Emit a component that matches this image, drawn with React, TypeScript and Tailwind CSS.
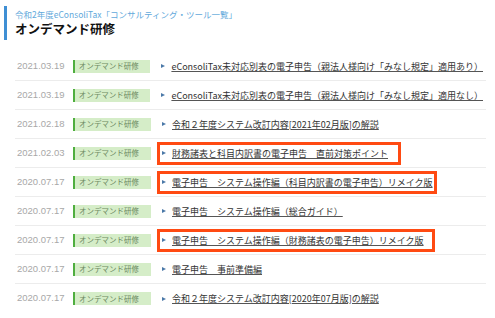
import React from 'react';

type Item = {
  date: string;
  title: string;
  boxWidth?: number;
};

const items: Item[] = [
  { date: '2021.03.19', title: 'eConsoliTax未対応別表の電子申告（親法人様向け「みなし規定」適用あり）' },
  { date: '2021.03.19', title: 'eConsoliTax未対応別表の電子申告（親法人様向け「みなし規定」適用なし）' },
  { date: '2021.02.18', title: '令和２年度システム改訂内容[2021年02月版]の解説' },
  { date: '2021.02.03', title: '財務諸表と科目内訳書の電子申告　直前対策ポイント', boxWidth: 244 },
  { date: '2020.07.17', title: '電子申告　システム操作編（科目内訳書の電子申告）リメイク版', boxWidth: 280 },
  { date: '2020.07.17', title: '電子申告　システム操作編（総合ガイド）' },
  { date: '2020.07.17', title: '電子申告　システム操作編（財務諸表の電子申告）リメイク版', boxWidth: 278 },
  { date: '2020.07.17', title: '電子申告　事前準備編' },
  { date: '2020.07.17', title: '令和２年度システム改訂内容[2020年07月版]の解説' },
];

const jp = { fontFamily: '"Noto Sans CJK JP", "Noto Sans", sans-serif' };

const Row: React.FC<{ item: Item }> = ({ item }) => {
  return (
    <li className="h-[29px] flex items-center border-b border-[#ececec] last:border-b-0">
      <span className="w-[56px] pl-[2px] text-[9.5px] text-[#a8a8a8] font-['Liberation_Sans',sans-serif]">{item.date}</span>
      <span className="ml-[2px] w-[78px] h-[13px] flex items-center bg-[#d5edc8] border-l-2 border-[#4fae3f] pl-[4px] text-[7.5px] leading-none text-[#6d8a62]" style={jp}>
        オンデマンド研修
      </span>
      <span
        className={
          item.boxWidth
            ? 'ml-[6px] h-[23px] flex items-center border-[3px] border-[#ff4a12] pl-[2px]'
            : 'ml-[6px] h-[23px] flex items-center border-[3px] border-transparent pl-[2px]'
        }
        style={item.boxWidth ? { width: item.boxWidth } : undefined}
      >
        <span className="w-0 h-0 border-y-[2.5px] border-y-transparent border-l-[4px] border-l-[#4b79a8]" />
        <a href="#" className="ml-[6px] text-[9px] leading-none text-[#333333] underline underline-offset-1 decoration-[#555555] whitespace-nowrap" style={jp}>
          {item.title}
        </a>
      </span>
    </li>
  );
};

export default function App() {
  return (
    <div className="w-[495px] h-[318px] bg-white overflow-hidden">
      <div className="ml-[4px] mt-[6px] h-[34px] border-l-[3px] border-[#3f8fd4] pl-[8px] flex flex-col justify-center">
        <p className="text-[8.5px] leading-[11px] text-[#62a9db]" style={jp}>令和2年度eConsoliTax「コンサルティング・ツール一覧」</p>
        <h1 className="text-[12.5px] leading-[18px] font-bold text-[#111111]" style={jp}>オンデマンド研修</h1>
      </div>
      <ul className="mt-[12px] ml-[15px] w-[471px]">
        {items.map((item, i) => (
          <Row key={i} item={item} />
        ))}
      </ul>
    </div>
  );
}
